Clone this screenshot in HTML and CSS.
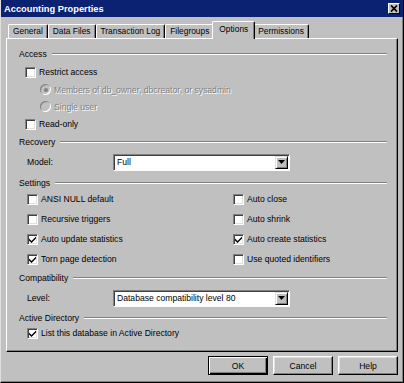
FILE: index.html
```html
<!DOCTYPE html>
<html lang="en">
<head>
  <meta charset="UTF-8" />
  <title>Accounting Properties</title>
  <link rel="stylesheet" href="styles.css">
</head>
<body>
  <div class="window">
    <div class="titlebar">
      <span class="title">Accounting Properties</span>
      <span class="close">
        <svg width="8" height="7" viewBox="0 0 8 7"><path d="M1 0.5 L7 6.5 M7 0.5 L1 6.5" stroke="#000" stroke-width="1.7" fill="none"/></svg>
      </span>
    </div>

    <div class="tabs">
      <div class="tab">General</div>
      <div class="tab">Data Files</div>
      <div class="tab">Transaction Log</div>
      <div class="tab">Filegroups</div>
      <div class="tab active">Options</div>
      <div class="tab">Permissions</div>
    </div>

    <div class="panel">
      <div class="group access">
        <div class="heading">Access</div>
        <div class="check"><span class="box"></span>Restrict access</div>
        <div class="option disabled"><span class="radio on"></span>Members of db_owner, dbcreator, or sysadmin</div>
        <div class="option disabled"><span class="radio"></span>Single user</div>
        <div class="check"><span class="box"></span>Read-only</div>
      </div>

      <div class="group recovery">
        <div class="heading">Recovery</div>
        <div class="field">
          <span class="label">Model:</span>
          <div class="select"><span>Full</span><span class="drop"><svg width="7" height="4" viewBox="0 0 7 4"><path d="M0 0 H7 L3.5 4 Z" fill="#000"/></svg></span></div>
        </div>
      </div>

      <div class="group settings">
        <div class="heading">Settings</div>
        <div class="grid">
          <div class="check"><span class="box"></span>ANSI NULL default</div>
          <div class="check"><span class="box"></span>Auto close</div>
          <div class="check"><span class="box"></span>Recursive triggers</div>
          <div class="check"><span class="box"></span>Auto shrink</div>
          <div class="check"><span class="box checked"><svg width="7" height="7" viewBox="0 0 7 7"><path d="M0 2.5 L2.5 5 L7 0.5 V2.6 L2.5 7 L0 4.5 Z" fill="#000"/></svg></span>Auto update statistics</div>
          <div class="check"><span class="box checked"><svg width="7" height="7" viewBox="0 0 7 7"><path d="M0 2.5 L2.5 5 L7 0.5 V2.6 L2.5 7 L0 4.5 Z" fill="#000"/></svg></span>Auto create statistics</div>
          <div class="check"><span class="box checked"><svg width="7" height="7" viewBox="0 0 7 7"><path d="M0 2.5 L2.5 5 L7 0.5 V2.6 L2.5 7 L0 4.5 Z" fill="#000"/></svg></span>Torn page detection</div>
          <div class="check"><span class="box"></span>Use quoted identifiers</div>
        </div>
      </div>

      <div class="group compat">
        <div class="heading">Compatibility</div>
        <div class="field">
          <span class="label">Level:</span>
          <div class="select"><span>Database compatibility level 80</span><span class="drop"><svg width="7" height="4" viewBox="0 0 7 4"><path d="M0 0 H7 L3.5 4 Z" fill="#000"/></svg></span></div>
        </div>
      </div>

      <div class="group directory">
        <div class="heading">Active Directory</div>
        <div class="check"><span class="box checked"><svg width="7" height="7" viewBox="0 0 7 7"><path d="M0 2.5 L2.5 5 L7 0.5 V2.6 L2.5 7 L0 4.5 Z" fill="#000"/></svg></span>List this database in Active Directory</div>
      </div>
    </div>

    <div class="buttons">
      <div class="btn default">OK</div>
      <div class="btn">Cancel</div>
      <div class="btn">Help</div>
    </div>
  </div>
</body>
</html>
```

FILE: styles.css
```css
body {
  margin: 0;
  background: #c0c0c0;
  font-family: 'Liberation Sans', Arial, sans-serif;
  font-size: 8.6px;
  color: #000;
}

.window {
  width: 404px;
  height: 383px;
  box-sizing: border-box;
  border-left: 1px solid #dfdfdf;
  border-right: 1px solid #000;
  border-bottom: 1px solid #000;
  box-shadow: inset -1px -1px #808080;
}

.titlebar {
  height: 17px;
  background: #0b2171;
  display: flex;
  align-items: center;
  justify-content: space-between;
  padding: 0 3px 0 3px;
}

.title {
  color: #fff;
  font-weight: bold;
  font-size: 9.3px;
}

.close {
  width: 12px;
  height: 11px;
  box-sizing: border-box;
  background: #c0c0c0;
  border: 1px solid;
  border-color: #fff #000 #000 #fff;
  display: flex;
  align-items: center;
  justify-content: center;
}

/* tab strip */
.tabs {
  height: 21px;
  display: flex;
  align-items: flex-end;
  padding-left: 7px;
  font-size: 8.4px;
}

.tab {
  height: 13px;
  line-height: 13px;
  padding: 0 4px;
  border-top: 1px solid #fff;
  border-left: 1px solid #fff;
  border-right: 1px solid #000;
  box-shadow: inset -1px 0 #808080;
  border-radius: 2px 2px 0 0;
  white-space: nowrap;
}

.tab.active {
  position: relative;
  z-index: 1;
  height: 17px;
  line-height: 15px;
  margin: 0 -2px -1px;
  padding: 0 6px;
  background: #c0c0c0;
}

.panel {
  margin: 0 5px 0 5px;
  padding: 7px 10px 9px 12px;
  border: 1px solid;
  border-color: #fff #000 #000 #fff;
  box-shadow: inset -1px -1px #808080;
}

.heading {
  display: flex;
  align-items: center;
  gap: 5px;
  height: 16px;
}

.heading::after {
  content: "";
  flex: 1;
  border-top: 1px solid #808080;
  border-bottom: 1px solid #fff;
}

.check {
  display: flex;
  align-items: center;
  gap: 3px;
  height: 18px;
  padding-left: 8px;
}

.access .check {
  padding-left: 6px;
}

.access .heading + .check {
  margin-top: 1px;
}

.box {
  width: 11px;
  height: 11px;
  box-sizing: border-box;
  background: #fff;
  border: 1px solid;
  border-color: #808080 #fff #fff #808080;
  box-shadow: inset 1px 1px #404040, inset -1px -1px #dfdfdf;
  display: flex;
  align-items: center;
  justify-content: center;
}

.option {
  display: flex;
  align-items: center;
  gap: 3px;
  height: 17px;
  padding-left: 21px;
}

.disabled {
  color: #808080;
  text-shadow: 1px 1px 0 #fff;
}

.radio {
  width: 11px;
  height: 11px;
  border-radius: 50%;
  background: #c0c0c0;
  box-shadow: inset 1px 1px #808080, inset -1px -1px #fff;
  display: flex;
  align-items: center;
  justify-content: center;
}

.radio.on::after {
  content: "";
  width: 4px;
  height: 4px;
  border-radius: 50%;
  background: #808080;
}

.field {
  display: flex;
  align-items: center;
  height: 20px;
  padding-left: 8px;
}

.label {
  width: 86px;
}

.select {
  width: 177px;
  height: 17px;
  box-sizing: border-box;
  background: #fff;
  border: 1px solid;
  border-color: #808080 #fff #fff #808080;
  box-shadow: inset 1px 1px #404040;
  display: flex;
  align-items: center;
  padding: 1px 1px 1px 3px;
}

.drop {
  margin-left: auto;
  width: 13px;
  height: 13px;
  box-sizing: border-box;
  background: #c0c0c0;
  border: 1px solid;
  border-color: #dfdfdf #000 #000 #dfdfdf;
  box-shadow: inset 1px 1px #fff, inset -1px -1px #808080;
  display: flex;
  align-items: center;
  justify-content: center;
}

.grid {
  display: grid;
  grid-template-columns: 206px 1fr;
  grid-auto-rows: 20px;
  padding-left: 8px;
  margin-top: -2px;
}

.grid .check {
  padding-left: 0;
  height: 20px;
}

.recovery { margin-top: 1px; }
.recovery .field { margin-top: 2px; }
.settings { margin-top: 3px; }
.compat { margin-top: 1px; }
.compat .field { margin-top: 2px; }
.directory { margin-top: 2px; }
.directory .check { margin-top: -2px; }

.buttons {
  display: flex;
  justify-content: flex-end;
  gap: 5px;
  padding: 4px 5px 0 0;
}

.btn {
  width: 60px;
  height: 19px;
  box-sizing: border-box;
  border: 1px solid;
  border-color: #fff #000 #000 #fff;
  box-shadow: inset -1px -1px #808080, inset 1px 1px #dfdfdf;
  display: flex;
  align-items: center;
  justify-content: center;
}

.btn.default {
  border-color: #000;
  box-shadow: inset 1px 1px #fff, inset -1px -1px #000, inset -2px -2px #808080;
}
```
